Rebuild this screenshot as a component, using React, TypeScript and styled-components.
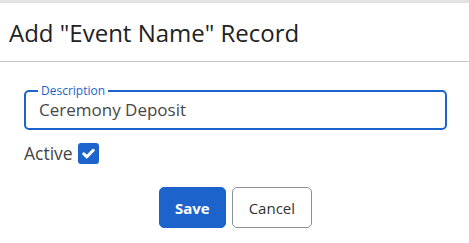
import React, { useState } from 'react';
import styled, { createGlobalStyle } from 'styled-components';

const GlobalStyle = createGlobalStyle`
  html, body {
    margin: 0;
    padding: 0;
    background: #e3e3e3;
  }
  body {
    font-family: 'Open Sans', 'Liberation Sans', sans-serif;
    -webkit-font-smoothing: antialiased;
  }
`;

const blue = '#1c64cb';

const Dialog = styled('div')`
  margin-top: 3px;
  background: #ffffff;
  height: 240px;
  display: flex;
  flex-direction: column;
`;

const Header = styled('div')`
  height: 59px;
  display: flex;
  align-items: center;
  padding: 0 9px;
  border-bottom: 1px solid #c9c9c9;
  box-sizing: border-box;
`;

const Title = styled('h2')`
  margin: 0;
  font-weight: normal;
  font-size: 24px;
  color: #222;
  letter-spacing: 0;
`;

const Body = styled('div')`
  padding: 22px 22px 0 24px;
  display: flex;
  flex-direction: column;
`;

const Field = styled('fieldset')`
  margin: 0;
  padding: 0 13px 7px;
  border: 2px solid ${blue};
  border-radius: 5px;
  min-width: 0;
`;

const Legend = styled('legend')`
  padding: 0 3px;
  margin-left: -1px;
  font-size: 12px;
  line-height: 13px;
  color: ${blue};
`;

const Input = styled('input')`
  display: block;
  width: 100%;
  border: none;
  outline: none;
  padding: 0;
  margin-top: 2px;
  font-family: inherit;
  font-size: 17px;
  line-height: 22px;
  color: #474747;
  background: transparent;
`;

const CheckRow = styled('label')`
  display: flex;
  align-items: center;
  gap: 5px;
  margin-top: 13px;
  font-size: 17.5px;
  line-height: 21px;
  color: #454545;
`;

const Box = styled('span')<{ checked: boolean }>`
  width: 21px;
  height: 21px;
  border-radius: 3px;
  box-sizing: border-box;
  background: ${(p) => (p.checked ? blue : '#fff')};
  border: ${(p) => (p.checked ? 'none' : '1px solid #888')};
  display: flex;
  align-items: center;
  justify-content: center;
`;

const Footer = styled('div')`
  display: flex;
  justify-content: center;
  gap: 6px;
  margin-top: 23px;
`;

const Button = styled('button')<{ primary?: boolean }>`
  height: 41px;
  padding: 0 ${(p) => (p.primary ? 15 : 16)}px;
  border-radius: 5px;
  font-family: inherit;
  font-size: 15px;
  font-weight: ${(p) => (p.primary ? 700 : 400)};
  color: ${(p) => (p.primary ? '#fff' : '#333')};
  background: ${(p) => (p.primary ? blue : '#fff')};
  border: 1px solid ${(p) => (p.primary ? blue : '#8d9095')};
  cursor: pointer;
`;

export default function App() {
  const [value, setValue] = useState('Ceremony Deposit');
  const [active, setActive] = useState(true);

  return (
    <>
      <GlobalStyle />
      <Dialog>
        <Header>
          <Title>Add "Event Name" Record</Title>
        </Header>
        <Body>
          <Field>
            <Legend>Description</Legend>
            <Input value={value} onChange={(e) => setValue(e.target.value)} />
          </Field>
          <CheckRow onClick={() => setActive(!active)}>
            Active
            <Box checked={active}>
              {active && (
                <svg width="13" height="11" viewBox="0 0 13 11">
                  <path d="M1.8 5.8 L4.9 8.8 L11.2 2.3" stroke="#fff" strokeWidth="3" fill="none" strokeLinecap="round" strokeLinejoin="round" />
                </svg>
              )}
            </Box>
          </CheckRow>
          <Footer>
            <Button primary>Save</Button>
            <Button>Cancel</Button>
          </Footer>
        </Body>
      </Dialog>
    </>
  );
}
